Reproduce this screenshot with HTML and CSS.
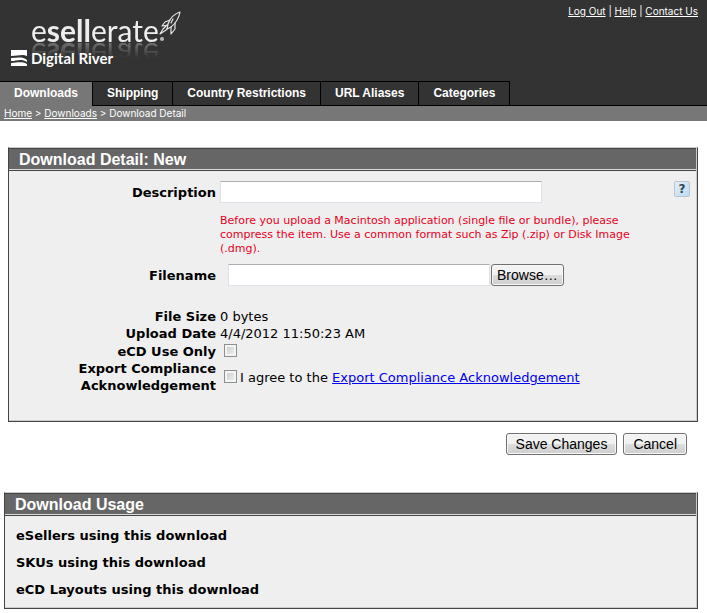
FILE: index.html
```html
<!DOCTYPE html>
<html lang="en">
<head>
<meta charset="utf-8">
<title>esellerate - Download Detail</title>
<link rel="stylesheet" href="styles.css">
</head>
<body>
<header class="masthead">
  <div class="logo">
    <div class="brand-row">
      <span class="brand">e<span class="heavy">sell</span>erate</span>
      <svg class="rocket" viewBox="0 0 24 32" width="24" height="32" aria-hidden="true">
        <circle cx="4" cy="28" r="2" fill="#bbb"/>
        <g fill="none" stroke="#e4e4e4" stroke-width="1.2" stroke-linecap="round" stroke-linejoin="round">
          <path d="M22 1 C16 3 12 7 10 13 L9 18 L13 16 C18 12 21 7 22 1 Z"/>
          <path d="M12 9 L7 11 L4 15 L10 14 M17 12 L17 18 L13 23 L13 16 M9 14 L5 18 L2 23 L8 19 L9 18"/>
          <path d="M15 8 L13 12"/>
        </g>
      </svg>
    </div>
    <div class="owner-row">
      <svg viewBox="0 0 16 16" width="16" height="16" aria-hidden="true">
        <path d="M0 0 H16 V6 C11 4 7 6 0 6 Z M0 8 C6 8 11 6 16 10 V12 C10 8 6 11 0 11 Z M0 13 C6 13 10 11 16 14 V16 H0 Z" fill="#fff"/>
      </svg>
      <span class="owner">Digital River</span>
    </div>
  </div>
  <nav class="account" aria-label="Account"><a href="#">Log Out</a> | <a href="#">Help</a> | <a href="#">Contact Us</a></nav>
</header>
<nav class="tabs" aria-label="Sections">
  <a class="tab current" href="#">Downloads</a>
  <a class="tab" href="#">Shipping</a>
  <a class="tab" href="#">Country Restrictions</a>
  <a class="tab" href="#">URL Aliases</a>
  <a class="tab" href="#">Categories</a>
</nav>
<nav class="crumbs" aria-label="Breadcrumb"><a href="#">Home</a> &gt; <a href="#">Downloads</a> &gt; Download Detail</nav>
<main>
  <form>
    <section class="panel detail">
      <h1 class="panel-title">Download Detail: New</h1>
      <div class="fields">
        <label class="name" for="description">Description</label>
        <div class="value description"><input class="text" id="description" type="text"><button class="help" type="button" aria-label="Help">?</button></div>
        <p class="note">Before you upload a Macintosh application (single file or bundle), please compress the item. Use a common format such as Zip (.zip) or Disk Image (.dmg).</p>
        <label class="name" for="filename">Filename</label>
        <div class="value file"><input class="text" id="filename" type="text"><button class="button browse" type="button">Browse…</button></div>
        <span class="name size">File Size</span><span class="value size">0 bytes</span>
        <span class="name">Upload Date</span><span class="value">4/4/2012 11:50:23 AM</span>
        <label class="name" for="ecd">eCD Use Only</label>
        <div class="value"><input class="check" id="ecd" type="checkbox"></div>
        <label class="name" for="agree">Export Compliance Acknowledgement</label>
        <div class="value"><input class="check" id="agree" type="checkbox"><span>I agree to the <a href="#">Export Compliance Acknowledgement</a></span></div>
      </div>
    </section>
    <div class="actions"><button class="button" type="submit">Save Changes</button><button class="button" type="button">Cancel</button></div>
  </form>
  <section class="panel usage">
    <h2 class="panel-title">Download Usage</h2>
    <ul class="list">
      <li>eSellers using this download</li>
      <li>SKUs using this download</li>
      <li>eCD Layouts using this download</li>
    </ul>
  </section>
</main>
</body>
</html>
```

FILE: styles.css
```css
* { box-sizing: border-box; }
body {
  margin: 0;
  background: #fff;
  color: #000;
  font: 13px/17px "DejaVu Sans", sans-serif;
}
.masthead {
  display: flex;
  justify-content: space-between;
  align-items: flex-start;
  padding-bottom: 14px;
  background: #333;
}
.logo { padding: 11px 0 0 11px; }
.brand-row {
  display: flex;
  align-items: flex-start;
  height: 38px;
  padding-left: 20px;
}
.brand {
  margin-top: 4px;
  color: #eee;
  font: 30px/30px Lato, sans-serif;
  -webkit-box-reflect: below -5px linear-gradient(transparent 40%, rgba(0, 0, 0, 0.4));
}
.heavy { font-weight: 700; }
.rocket { margin-left: -1px; }
.owner-row {
  display: flex;
  align-items: center;
  gap: 4px;
  height: 18px;
}
.owner {
  color: #fff;
  font: bold 15px/18px Lato, sans-serif;
}
.account {
  padding: 5px 9px 0 0;
  color: #fff;
  font: 10px/12px Inter, sans-serif;
}
.account a, .crumbs a { color: inherit; }
.tabs {
  display: flex;
  background: #333;
  border-bottom: 1px solid #000;
}
.tab {
  padding: 0 14px;
  border: solid #000;
  border-width: 1px 1px 0 0;
  color: #fff;
  font: bold 12px/23px "Liberation Sans", sans-serif;
  text-decoration: none;
}
.current {
  margin-bottom: -1px;
  background: #777;
}
.crumbs {
  padding: 1px 4px 2px;
  background: #777;
  color: #fff;
  font: 10px/12px Inter, sans-serif;
}
.panel {
  border: 1px solid #444;
  border-top-color: #ccc;
  background: #efefef;
  box-shadow: inset -1px -1px #ccc;
}
.panel-title {
  margin: 0 1px 0 0;
  padding: 0 10px;
  border-top: 1px solid #444;
  border-bottom: 1px solid #444;
  background: #666;
  box-shadow: inset 0 -1px #ddd;
  color: #fff;
  font: bold 16px/21px "Liberation Sans", sans-serif;
}
.detail { margin: 26px 9px 0 8px; }
.fields {
  display: grid;
  grid-template-columns: 207px 1fr;
  column-gap: 4px;
  align-items: center;
  padding: 10px 7px 27px 0;
}
.name {
  font-weight: bold;
  text-align: right;
}
.value {
  display: flex;
  align-items: center;
}
.description { justify-content: space-between; }
.text {
  width: 322px;
  height: 22px;
  border: 1px solid #dde2e8;
  border-top-color: #abadb3;
  border-radius: 1px;
  background: #fff;
}
.help {
  width: 16px;
  height: 16px;
  margin-bottom: 6px;
  padding: 0;
  border: 1px solid #bbc4cc;
  border-radius: 2px;
  background: linear-gradient(135deg, #e4eef6, #bcdcf4);
  color: #345;
  font: bold 12px/14px "DejaVu Sans", sans-serif;
}
.note {
  grid-column: 2;
  max-width: 430px;
  margin: 11px 0 8px;
  color: #e8001c;
  font-size: 11px;
  line-height: 14px;
}
.file { padding-left: 8px; }
.file .text { width: 262px; margin-right: 1px; }
.button {
  height: 22px;
  padding: 0 9px;
  border: 1px solid #707070;
  border-radius: 3px;
  background: linear-gradient(#f2f2f2 50%, #ddd 50%, #cfcfcf);
  box-shadow: inset 0 0 0 1px #f8f8f8;
  color: #000;
  font: 14px/20px "Liberation Sans", sans-serif;
}
.browse { padding: 0 5px; }
.size { margin-top: 22px; }
.check {
  appearance: none;
  width: 13px;
  height: 13px;
  margin: 2px 3px 3px 4px;
  border: 1px solid #8e8f8f;
  background: linear-gradient(135deg, #c4c8cc, #f4f4f4);
  box-shadow: inset 0 0 0 2px #f4f4f4;
}
.value a { color: #00e; }
.actions {
  display: flex;
  justify-content: flex-end;
  gap: 6px;
  padding: 11px 20px 0 0;
}
.usage { margin: 37px 9px 0 4px; }
.list {
  margin: 0;
  padding: 6px 11px 5px;
  font-weight: bold;
  line-height: 27px;
  list-style: none;
}
```
